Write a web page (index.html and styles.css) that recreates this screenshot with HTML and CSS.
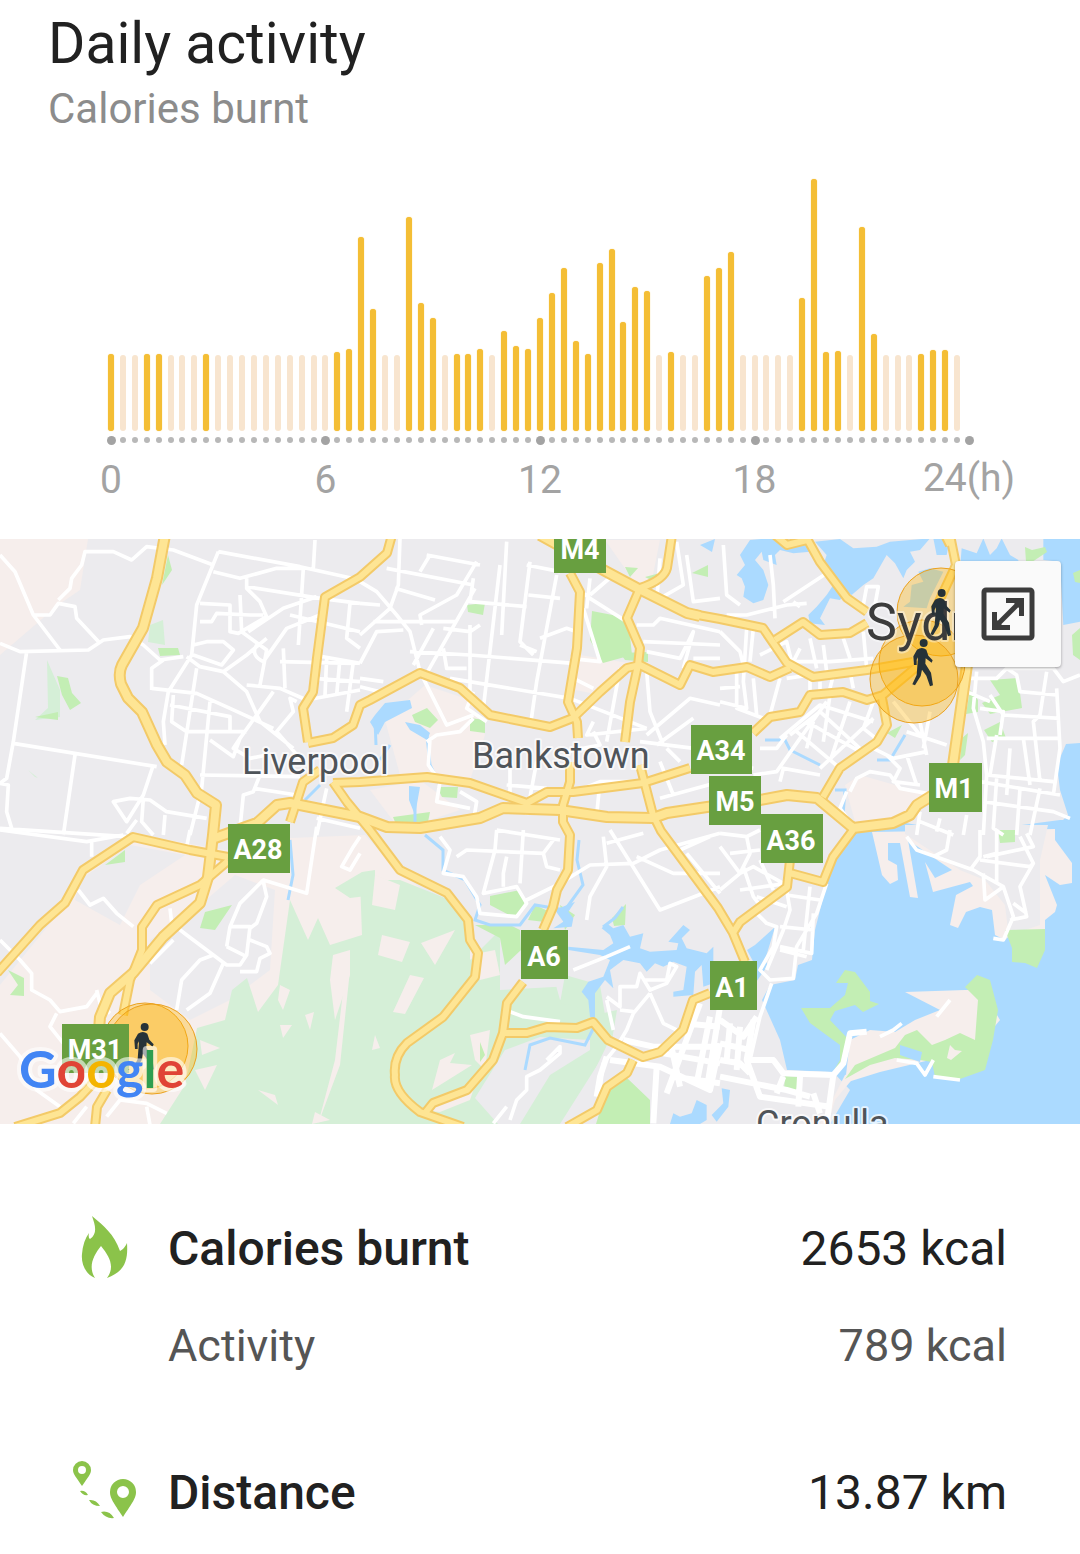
FILE: index.html
```html
<!DOCTYPE html>
<html lang="en">
<head>
<meta charset="utf-8">
<meta name="viewport" content="width=device-width, initial-scale=1">
<title>Daily activity</title>
<link rel="stylesheet" href="styles.css">
</head>
<body>
<main class="page">
  <header class="head">
    <h1 class="title">Daily activity</h1>
    <p class="subtitle">Calories burnt</p>
  </header>

  <section class="chart" aria-label="Calories burnt by hour">
    <div class="bars">
      <i class="on major" style="height:77px"></i><i></i><i></i><i class="on" style="height:77px"></i><i class="on" style="height:77px"></i><i></i>
      <i></i><i></i><i class="on" style="height:77px"></i><i></i><i></i><i></i>
      <i></i><i></i><i></i><i></i><i></i><i></i>
      <i class="major"></i><i class="on" style="height:79px"></i><i class="on" style="height:82px"></i><i class="on" style="height:194px"></i><i class="on" style="height:122px"></i><i></i>
      <i></i><i class="on" style="height:214px"></i><i class="on" style="height:128px"></i><i class="on" style="height:113px"></i><i></i><i class="on" style="height:77px"></i>
      <i class="on" style="height:77px"></i><i class="on" style="height:82px"></i><i></i><i class="on" style="height:100px"></i><i class="on" style="height:85px"></i><i class="on" style="height:82px"></i>
      <i class="on major" style="height:113px"></i><i class="on" style="height:138px"></i><i class="on" style="height:163px"></i><i class="on" style="height:90px"></i><i class="on" style="height:77px"></i><i class="on" style="height:168px"></i>
      <i class="on" style="height:182px"></i><i class="on" style="height:109px"></i><i class="on" style="height:144px"></i><i class="on" style="height:140px"></i><i></i><i class="on" style="height:79px"></i>
      <i></i><i></i><i class="on" style="height:155px"></i><i class="on" style="height:163px"></i><i class="on" style="height:179px"></i><i></i>
      <i class="major"></i><i></i><i></i><i></i><i class="on" style="height:133px"></i><i class="on" style="height:252px"></i>
      <i class="on" style="height:79px"></i><i class="on" style="height:80px"></i><i></i><i class="on" style="height:204px"></i><i class="on" style="height:97px"></i><i></i>
      <i></i><i></i><i class="on" style="height:77px"></i><i class="on" style="height:81px"></i><i class="on" style="height:81px"></i><i></i>
      <i class="end major"></i>
    </div>
    <div class="hours"><span>0</span><span>6</span><span>12</span><span>18</span><span class="last">24(h)</span></div>
  </section>

  <section class="map" aria-label="Activity map">
    <svg class="map-art" viewBox="0 539 1080 585" role="img" aria-label="Map of Sydney">
      <defs>
        <g id="main-roads">
          <path d="M-3 973L40 925 65 903 83 870 133 837 190 850 228 857"/>
          <path d="M228 861L200 885 157 905 142 927 142 950 130 980 123 1015"/>
          <path d="M15 1127L60 1113 80 1097 93 1083M95 1127L97 1107 107 1090"/>
          <path d="M950 535L956 565 935 610M945 535L950 545"/>
          <path d="M392 535L387 553 360 577 325 597 317 658 313 692 303 708 308 742M320 770L303 782 290 822"/>
          <path d="M308 743L333 738 353 725 360 705 370 700 420 673 460 688 490 715 550 727 573 718 600 692 627 668 640 665 680 685 690 665 713 672 747 667 770 677 790 668"/>
          <path d="M687 613L720 619 763 628 787 663 813 677 867 670 913 662"/>
          <path d="M570 573L580 592 577 648 568 702 577 722 578 738M570 762L570 782 563 805 563 822 570 835 568 870 557 890 553 907 543 930M523 982L507 1003 503 1033 493 1060 467 1090 433 1103 425 1113"/>
          <path d="M672 535L667 568Q664 580 640 588L627 618 640 648 638 665 630 702 625 742M640 765L653 815 661 831 718 908 733 933 745 962M733 933L740 922 787 887 790 860M790 873L823 882 833 857 853 830"/>
          <path d="M333 782L347 802 370 830 400 870 447 893 468 920 470 940 478 953 475 977 443 1017 407 1043Q393 1057 395 1075 393 1092 420 1112L463 1127"/>
          <path d="M503 1033L527 1033 547 1027 577 1028 593 1022 608 1040 643 1057 660 1052 683 1030 693 1000 710 993M633 1060L627 1073 607 1087 597 1110 567 1127"/>
          <path d="M333 783L360 782 427 777 470 783 527 803 547 792 573 792 643 783 690 768"/>
          <path d="M805 535L820 562 847 598 867 612M775 640L803 622 820 635 850 633 867 623M753 733L770 717 800 712 810 695 843 692 867 700 883 695 920 664M882 698L887 725 877 742 840 768 823 797M775 535L787 545 807 540"/>
        </g>
        <g id="motorways">
          <path d="M165 535L157 578 143 628 122 665Q118 673 121 684L128 698 142 712 157 745 167 762 185 775 197 793 216 805 213 835 208 877 200 903 163 937 133 973 110 993 100 1017 99 1030"/>
          <path d="M215 838L257 823 277 805 290 803 360 817 387 827 420 828 480 818 503 808 560 810 607 817 653 818 667 813 707 807 760 800 787 795 817 798 853 828 893 823 910 815 917 805 933 795"/>
          <path d="M967 665L953 765M540 535L607 572 637 588 687 613 700 616"/>
        </g>
        <g id="walker">
          <circle cx="35" cy="12" r="12"/>
          <path d="M15 32Q30 22 43 32L49 50 62 64 59 71 41 58 40 74 57 101 63 139 54 142 43 110 30 92 26 111 9 139 1 136 14 108 18 55 14 62 14 78 6 78 4 52Z"/>
        </g>
      </defs>

      <rect y="539" width="1080" height="585" fill="#ecebee"/>

      <!-- open ground, lower left -->
      <g fill="#f6eeec">
        <path d="M0 539H88L80 590 58 605 35 625 0 655Z"/>
        <path d="M0 985L65 905 90 868 140 835 225 850 290 838 365 835 400 873 470 925 475 980 400 1050 400 1124H0Z"/>
        <path d="M385 720L425 685 470 700 485 735 470 780 400 775Z"/>
        <path d="M605 540H660L650 590 700 625 640 590Z"/>
        <path d="M580 655L640 665 600 695 575 690Z"/>
        <path d="M845 785L860 775 895 785 925 795 895 825 855 822Z"/>
        <path d="M370 790L420 780 460 810 400 830Z"/>
      </g>
      <g fill="#ecebee">
        <path d="M80 880L130 845 185 855 140 885 120 925 75 900Z"/>
        <path d="M150 940L200 905 235 875 275 890 270 970 230 1000 190 1020 150 990Z"/>
        <path d="M500 990L590 975 600 1020 510 1025Z"/>
      </g>

      <!-- bush and parks -->
      <g fill="#d5efd7">
        <path d="M197 1028L225 1020 232 990 247 978 258 1012 278 985 290 900 308 940 318 918 330 945 362 935 360 880 400 880 450 900 470 930 470 960 500 930 545 945 560 1000 600 985 610 1045 560 1124H160L185 1085Z"/>
        <path d="M47 660L60 690 60 717 35 720 48 708ZM150 625L163 620 165 645 148 642ZM28 770L38 778 35 777Z"/>
        <path d="M335 888L362 872 375 870 375 895 350 898Z"/>
      </g>
      <g fill="#f6eeec">
        <path d="M333 955L350 950 350 975 335 1020 330 980ZM280 985L290 990 283 1010 278 1000ZM280 1025L292 1025 283 1038ZM305 1015L314 1012 310 1030ZM200 1040L220 1048 202 1055ZM195 1070L217 1065 205 1090ZM258 1090L275 1095 278 1105ZM315 1112L330 1120 312 1124Z"/>
        <path d="M382 935L410 942 402 962 378 955ZM410 975L424 978 405 1014 393 1012ZM421 943L455 930 435 965ZM375 875L400 885 395 910 372 905ZM470 955L495 950 500 975 480 980ZM440 1060L455 1053 450 1063 472 1065 432 1090ZM375 1035L380 1048 372 1050ZM470 1035L490 1030 485 1070 475 1060ZM420 1110L475 1085 470 1100 440 1112Z"/>
        <path d="M345 975L350 970 340 1065 318 1124 335 1060Z"/>
      </g>
      <path d="M475 1098L505 1050 540 1037 590 1040 590 1050 550 1075 520 1124H498ZM607 1045L640 1060 610 1090 590 1080Z" fill="#ecebee"/>
      <path d="M500 930L475 925 490 900 490 860 580 860 590 985 500 990Z" fill="#ecebee"/>
      <path d="M565 975L600 985 598 1012 560 1003ZM595 1015L617 1010 612 1040Z" fill="#d5efd7"/>
      <g fill="#c3eeb4">
        <path d="M592 611L628 618 632 655 603 663 590 640Z"/>
        <path d="M57 676L68 678 72 693 81 703 70 710 62 695ZM158 648L178 648 180 655 160 656ZM168 555L172 570 162 585ZM35 717L58 720 58 712Z"/>
        <path d="M467 605L485 603 483 615 468 612ZM412 715L427 708 438 720 430 728 415 722ZM470 718L485 720 485 733 470 731ZM437 787L458 787 457 798 442 797ZM393 817L430 812 428 822 395 822ZM625 567L638 568 630 577ZM645 577L660 573 655 582ZM692 573L708 565 708 577ZM620 653L648 652 648 662 625 660Z"/>
        <path d="M490 896L520 890 525 905 515 918 490 905ZM475 925L510 925 520 930 521 950 505 965 500 938ZM535 905L550 912 545 922 528 920ZM560 905L575 915 565 930Z"/>
        <path d="M607 1088L627 1078 650 1100 650 1124H596ZM480 1042L485 1055 480 1062ZM612 918L626 904 625 925 614 926Z"/>
        <path d="M990 680L1018 678 1022 708 990 714 982 703 1000 695ZM970 690L978 700 978 712 966 714ZM984 730L1000 722 1006 738 992 742ZM962 738L968 733 965 755 960 760ZM887 733L902 725 895 738ZM205 912L232 905 215 930 200 928ZM8 970L24 978 24 996 10 995 18 985ZM105 865L125 850 125 862ZM1072 635L1080 628V660L1073 655Z"/>
      </g>

      <!-- harbour, bay, ocean and rivers -->
      <g fill="#abdaff">
        <g transform="translate(730 535) scale(.333333)">
          <path d="M60 15L115 10 190 15 250 35 240 50 190 55 150 45 135 60 140 90 100 75 95 50 75 75 100 105 115 150 100 195 70 205 40 185 45 155 35 130 20 120 45 90 30 60Z"/>
          <path d="M255 20L330 12 370 40 440 35 480 20 600 10 570 45 540 50 555 80 530 105 520 130 495 85 470 60 430 130 400 150 365 180 350 170 330 195 300 190 270 250 285 270 240 265 235 240 260 215 290 180 310 150 280 90 290 60Z"/>
          <path d="M545 150L580 140 565 110 600 100 640 110 600 190 590 220 520 215 540 200ZM610 10L660 10 650 60 620 60Z"/>
          <path d="M695 40L740 55 760 10 780 60 800 40 815 10 840 60 865 75 865 100 690 100ZM940 12L1050 10V260L1000 270 990 80 940 75Z"/>
        </g>
        <g transform="translate(540 900) scale(.333333)">
          <path d="M85 140L190 150 220 130 210 105 185 85 200 70 220 85 250 75 270 110 310 100 300 145 330 155 410 150 415 130 385 125 430 75 450 90 425 115 440 145 500 160 520 140 520 250 490 260 485 195 465 215 460 285 400 290 400 275 430 270 440 200 400 185 370 200 345 190 320 215 300 190 250 180 210 210 220 265 195 240 165 280 165 355 150 350 145 300 125 275 145 245 190 230 210 180 180 165 85 150Z"/>
          <path d="M390 672L400 640 420 650 455 640 470 600 500 615 500 660 480 672ZM545 565L570 570 565 620 530 665 515 645 550 610ZM45 30L105 5 85 35 100 55 95 80 40 85 70 65Z"/>
        </g>
        <path d="M700 545L715 539 712 552ZM1066 744L1080 743V840H1060L1055 828 1068 815 1060 790 1057 765Z"/>
        <path d="M853 832L835 860 825 890 815 930 812 960 798 965 795 980 770 985 762 1000 780 1040 787 1070 833 1072 850 1090 830 1124H1080V820H1060L1000 828 935 828 900 822Z"/>
        <path d="M775 927L755 945 747 950 755 965 752 988 768 965 765 960Z"/>
        <path d="M375 715L385 703 410 700 412 708 385 722 378 735 370 722ZM405 722L420 725 430 733 427 740 410 730ZM409 786L420 787 415 815 409 800Z"/>
      </g>
      <path d="M1025 547L1032 550 1045 547 1047 552 1032 562H1026ZM1073 573L1080 570V583L1075 582Z" fill="#c3eeb4"/>
      <g class="river">
        <path d="M375 720L376 745M427 735L430 765 440 785M415 790L415 822M425 835L443 850 443 870 465 880 480 905 475 920 490 925 520 925 535 905 565 910 583 885 577 860 579 840M603 927L615 918 623 907M290 840L293 875 288 900M525 1070L530 1045 550 1038 585 1045 595 1025M380 760L390 745M305 800L320 785M835 790L845 790 843 815M877 760L890 760 905 735M765 740L785 740 790 750 820 765"/>
      </g>

      <!-- peninsulas and islands in the bay -->
      <path d="M872 832L882 875 890 884 898 880 897 865 888 860 888 843 900 843 910 897 918 898 908 840 940 862 952 870 935 878 925 862 933 892 970 882 973 886 956 895 950 925 958 928 966 912 980 907 992 910 995 935 1005 940 1015 930H1045V920L1055 912 1057 905 1045 875 1060 885 1072 883 1072 863 1055 840 1055 829Z" fill="#f6eeec"/>
      <path d="M905 834L960 870 985 880 1005 905 1008 930H1025L1040 925 1040 860 1048 825H905Z" fill="#ecebee"/>
      <g fill="#f6eeec">
        <path d="M905 992L965 990 982 990 1000 1020 975 1050 930 1060 880 1072 848 1082 846 1075 850 1040 870 1030 895 1032 915 1020 940 1010Z"/>
        <path d="M845 1075L860 1070 835 1100 828 1124H820Z"/>
      </g>
      <g fill="#c3eeb4">
        <path d="M836 983L845 970 855 972 870 992 870 1001 879 1004 863 1012 855 1005 835 1011 830 1020 849 1040 845 1065 833 1072 840 1060 840 1045 810 1023 801 1008 830 1008 845 995 848 983Z"/>
        <path d="M965 987L977 975 990 980 998 1010 993 1040 985 1070 960 1079 935 1077 932 1062 920 1060 895 1058 870 1065 845 1079 855 1065 895 1048 905 1035 917 1030 932 1045 945 1040 960 1033 975 1040 978 1000Z"/>
        <path d="M1005 930L1045 929 1045 950 1037 968 1025 963 1012 962 1012 948Z"/>
        <path d="M998 830L1015 830 1015 842 1000 843ZM785 1076L799 1077 796 1092 784 1090Z"/>
      </g>
      <path d="M900 1045L922 1052 920 1062 900 1055Z" fill="#abdaff"/>
      <path d="M950 1045L955 1050 962 1051 951 1060 947 1058Z" fill="#f6eeec"/>

      <!-- local streets, drawn on a grid of thirds -->
      <g class="streets">
        <g transform="translate(0 535) scale(.333333)">
          <path d="M0 60L45 110 100 240 180 345M0 325L60 350 265 345 310 315 390 305 430 330 480 375 550 365M100 240L150 240 175 205 225 215 230 250 300 325M175 195L210 160 215 130 245 90 255 50 340 50 395 75 440 35 520 45 640 90M80 350L40 620 20 730 0 745 25 750 20 830 35 880M40 625L470 695M225 660L190 900M0 880L380 905"/>
          <path d="M655 50L590 210 575 360 505 470 490 560 495 630M655 50L900 95 1080 135M640 110L720 130 830 100 910 100M945 15L940 100M910 100L895 330M740 130L740 160 780 200 800 245 715 295 690 290 690 210 600 205M740 155L960 190 1080 205M600 260L635 260 650 235 750 240 790 240M745 290L850 220 950 185M720 180L725 290 800 345 780 450M580 330L620 320 670 320 700 345 665 390 580 360M770 330Q750 360 790 380L860 280 960 240M870 240L1080 290M560 365L600 395 670 410 740 360 800 310M670 410L740 470 780 560 880 640M740 450L840 460 920 495 1080 465M850 340L855 460M840 380L1060 385M940 360L1080 385M1050 205L1040 310 1080 340M980 370L975 480M1020 370L1010 480M940 430L1080 440M1060 380L1040 530M455 465L455 400 490 375M455 460L590 475 690 520 820 580M510 510L690 545 690 590M520 480L515 560 560 590 740 590M590 400L545 690M630 500L605 760 570 900M630 615L700 665 720 610 820 470M890 500L870 490 880 530 830 590 900 670M720 610L700 640 750 670 800 660M460 690L430 780 380 860 340 800 390 790 450 795 500 830 620 850M600 720L900 725M780 720L760 770 730 780 720 880M760 760L890 780M430 790L425 860 460 900M490 900L495 840M980 760L950 900M950 850L1080 880"/>
        </g>
        <g transform="translate(360 535) scale(.333333)">
          <path d="M0 140L50 170 110 240 150 290 180 410M120 10L115 150 90 220 0 300M80 100L340 150M210 60L180 110M105 160L225 195M350 80L290 180 180 240 185 270M200 60L360 90M0 205L60 210M40 260L290 260M0 385L50 290 130 285M345 160L200 415M420 90L370 520M340 130L330 200 500 215M440 20L425 300M510 80L480 320 520 360M500 90L600 110M505 180L600 190M590 120L530 440 510 580M150 350L330 360 640 385M220 280L160 390M250 340L260 400 320 400M330 270L330 470M250 280L330 290 360 270M270 430L630 490 860 580M540 310L620 280 650 290M480 330L530 350M0 430L70 440M0 455L60 470M190 430L240 530 260 570 340 540M200 620L230 600 300 590 340 550M210 610L205 690 240 740M340 470L320 520 380 560M640 430L700 460M670 220L720 380 630 370M690 180L760 120M690 130L680 220M650 160L690 190 800 260M900 70L890 200M900 190L970 150 950 20M980 60L1000 200 1080 190M830 270L880 270 900 250 1080 290M850 320L1080 330M860 350L960 370 1000 290 970 400M860 410L870 530 910 630M1000 370L1080 370M780 400L740 620M700 560L680 600 860 580M860 600L990 490 1080 510M840 620L1080 650M890 630L1000 550M700 590L720 630 620 650M450 700L450 790 530 800M440 750L560 760M530 680L500 840M670 760L720 740 860 740M710 840L720 740M900 790L1080 740M900 680L940 780M960 680L920 640M300 770L350 800 340 860M240 740L230 800 330 820"/>
        </g>
        <g transform="translate(720 535) scale(.333333)">
          <path d="M10 30L20 180 60 210M150 60L160 150 165 250M190 200L320 115M20 240L80 240 200 210 260 205M220 200L240 215M0 290L60 350 70 390M80 280L70 440 80 520 0 500M100 280L90 380M120 360L200 320 220 400M240 340L220 380 330 380 460 370M270 310L290 400M310 330L320 410M370 310L390 370M430 290L440 400M430 210L440 155 475 155 465 210M50 400L50 520 130 550M0 460L60 455M100 430L110 540M180 430L150 540M200 430L270 420 270 490M300 440L300 480M340 420L330 460M390 410L400 460M260 560L330 600 420 650M210 600L300 530 430 650M180 610L300 510 460 560M230 590L360 700M280 560L260 640M320 500L240 610M330 480L310 620M390 500L330 680M460 500L430 580 480 620M100 720L170 710 240 610M0 680L100 700M120 640L170 640 200 600M180 740L190 700 300 720M740 430L830 430 860 400 1000 400 1030 440 1080 420M770 410L760 520 790 620 800 720 790 900M740 470L810 500M810 480L850 540 1020 550M780 520L850 530 840 600M860 400L890 420 900 470 1010 480M980 410L960 540 940 560 960 740M800 610L1020 610M1010 460L1020 640 1000 780M870 640L860 780M910 610L930 750M800 720L1000 740M830 600L810 720M780 740L1020 780M790 800L1000 830 1050 850M830 730L820 880 850 900M900 760L890 900M960 760L930 900M460 640L520 670 620 650M500 660L540 700 520 740 600 750M390 770L410 730 450 710 510 720 540 760 620 775M560 660L590 750M600 560L620 660M560 590L680 630M520 500L600 600M630 530L610 640M390 860L360 820 380 770M600 830L590 900M660 850L650 890M740 840L730 900M600 860L700 900M300 700L460 550"/>
        </g>
        <g transform="translate(0 830) scale(.333333)">
          <path d="M0 0L260 35 370 15M275 30L275 80M380 10L410 -30M570 0L560 50M235 180L270 225 310 205 350 250 400 290M510 235L515 280 560 315 640 375 680 405 720 405 740 375 750 290 690 290 680 350M690 290L720 220 790 150 920 190 950 -10M790 155L800 200 770 280 750 295M750 330L800 350 810 370 780 385 770 425 720 425M680 350L740 380M520 330L450 400M640 375L600 390 545 450 530 540M670 400L630 490 560 540M0 330L60 390 95 430 95 480 150 510 180 545 260 530 290 490M170 550L150 590 190 640M0 610L60 680 110 780 180 830M1080 20L1060 50 1025 110 1050 120 1080 70M320 860L360 810 440 820 500 850M440 830L450 885M220 880L260 830M290 480L300 520 330 550"/>
        </g>
        <g transform="translate(360 830) scale(.333333)">
          <path d="M240 20L270 60 250 130 310 140 350 200 360 250 470 260 500 220 470 170 370 190 405 60 410 0M290 80L320 60 550 70 560 110 600 120M480 160L490 0M440 80L430 130 430 170M410 0L600 30M550 70L580 30M500 210L600 160 690 105 820 100 900 60 1080 10M730 20L740 110 690 200 680 270M750 0L900 240 1080 170M740 40L850 10M830 80L940 130 1080 130M960 60L1050 20M980 70L1080 190M450 545L490 560 600 575M640 420L740 380 810 350M740 510L760 600M740 500L780 530 780 470 830 470 840 430 870 480 920 460 950 410 930 400 920 450 850 450M870 490L820 550 800 600 770 650 730 700 720 780M870 490L910 580 950 600M820 545L780 540M560 690L600 650 600 670 540 720 500 740 500 780 470 810 450 870M400 880L440 830"/>
        </g>
        <g transform="translate(720 830) scale(.333333)">
          <path d="M0 50L60 130 0 180M0 10L80 20 120 0M80 20L90 70 60 130 100 110 190 160M30 70L120 60M70 110L100 200 130 240M120 90L160 180M60 180L200 160M110 250L140 280 170 290 160 350 120 420 150 450 220 445 230 350 290 250 320 160M110 200L200 230M200 180L210 240 190 300 140 420M200 195L300 210M180 290L280 300M270 170L250 360M280 250L275 370 180 350M180 360L260 380M155 460L120 560 90 690M560 20L590 60 760 120 850 170 880 260 850 330 820 325M690 0L680 60 640 80M780 0L780 80 750 120M800 80L940 50 920 10M830 0L830 160M780 90L930 110 940 100 900 170 920 260 870 270M790 80L830 70M790 130L795 210 850 170M900 20L940 100M880 220L920 250M530 690L590 700 615 735 640 690M640 740L720 750M480 620L520 600 545 580M690 510L650 560"/>
        </g>
        <g class="wide" transform="translate(360 830) scale(.333333)">
          <path d="M1020 520L920 790M1080 590L970 580M790 630L880 650 1080 650M750 690L900 710 1050 780 1080 640M910 670L1080 700M930 630L960 770M1050 560L1010 760M740 680L720 740 710 800M890 710L880 880M940 740L1080 760M1080 530L1040 780"/>
        </g>
        <g class="wide" transform="translate(720 830) scale(.333333)">
          <path d="M110 560L70 620 0 570M100 570L80 690 120 800 330 830M0 640L90 660M0 690L60 700 90 730M80 690L160 690 190 730 340 735 370 700 390 610 440 605M0 740L200 780 270 800M60 590L50 720M190 740L170 790M340 735L320 880M240 740L235 830M280 790L300 850M30 580L20 690"/>
        </g>
      </g>

      <use href="#main-roads" class="road-case"/>
      <use href="#motorways" class="road-case motorway"/>
      <use href="#main-roads" class="road-fill"/>
      <use href="#motorways" class="road-fill motorway"/>

      <!-- place names, activity zones and route shields -->
      <g class="zone">
        <circle cx="941" cy="612" r="44"/><circle cx="922" cy="663" r="43"/><circle cx="914" cy="679" r="44"/>
        <circle cx="145" cy="1046" r="43"/><circle cx="152" cy="1049" r="45"/>
      </g>
      <g class="place">
        <text x="242" y="774">Liverpool</text>
        <text x="472" y="768">Bankstown</text>
        <text x="756" y="1136">Cronulla</text>
        <text x="866" y="640" class="city">Sydney</text>
      </g>
      <g fill="#689f40">
        <path d="M554 539H606V573H554ZM691 725H752V774H691ZM709 776H761V825H709ZM761 814H823V863H761ZM929 763H982V812H929ZM228 824H290V873H228ZM521 930H568V979H521ZM710 961H757V1010H710ZM62 1024H129V1073H62Z"/>
      </g>
      <g class="shield">
        <text x="580" y="559">M4</text><text x="721" y="760">A34</text><text x="735" y="811">M5</text><text x="791" y="850">A36</text><text x="954" y="798">M1</text><text x="258" y="859">A28</text><text x="544" y="966">A6</text><text x="732" y="997">A1</text><text x="95" y="1059">M31</text>
      </g>

      <g fill="#263238">
        <use href="#walker" transform="translate(930 589) scale(.333333)"/>
        <use href="#walker" transform="translate(912 639) scale(.333333)"/>
        <use href="#walker" transform="translate(133 1023) scale(.333333)"/>
      </g>
      <text x="19" y="1088" class="logo"><tspan fill="#4285f4">G</tspan><tspan fill="#e04436">o</tspan><tspan fill="#f4b400">o</tspan><tspan fill="#4285f4">g</tspan><tspan fill="#2f9e50">l</tspan><tspan fill="#e04436">e</tspan></text>
    </svg>
    <button class="expand" type="button" aria-label="Expand map">
      <svg viewBox="0 0 54 54" width="54" height="54" aria-hidden="true">
        <rect x="3" y="3" width="48" height="48" rx="2" fill="none" stroke="#3c3c3c" stroke-width="5"/>
        <path d="M15 39L39 15" stroke="#3c3c3c" stroke-width="5"/>
        <path fill="#3c3c3c" d="M25 11H43V29H38V21L33 16H25ZM11 25H16V33L21 38H29V43H11Z"/>
      </svg>
    </button>
  </section>

  <section class="stats">
    <div class="stat">
      <svg class="icon" viewBox="0 0 72 72" aria-hidden="true"><path fill="#8bc34a" d="M28 4C40 14 50 22 56 39Q61 36 63 31C64 47 62 59 43 66C51 55 46 45 37 34C29 44 24 55 31 66C21 62 17 51 18 42Q19 29 25 21Q24 26 26 27C34 21 31 13 28 4Z"/></svg>
      <h2 class="name">Calories burnt</h2><span class="value">2653 kcal</span>
    </div>
    <div class="stat sub">
      <span class="name">Activity</span><span class="value">789 kcal</span>
    </div>
    <div class="stat">
      <svg class="icon" viewBox="0 0 72 72" aria-hidden="true"><g fill="#8bc34a" fill-rule="evenodd"><path d="M18 30C12 21 9 18 9 14A9 9 0 0 1 27 14C27 18 24 21 18 30ZM18 10A4 4 0 1 0 18 18 4 4 0 0 0 18 10ZM59 61C49 46 46 42 46 36A13 13 0 0 1 72 36C72 42 69 46 59 61ZM59 30A6 6 0 1 0 59 42 6 6 0 0 0 59 30Z"/><path d="M16 35Q21 34 24 39 19 40 16 35ZM25 44Q32 43 36 50 28 50 25 44ZM37 56Q45 54 50 62 42 63 37 56Z"/></g></svg>
      <h2 class="name">Distance</h2><span class="value">13.87 km</span>
    </div>
  </section>
</main>
</body>
</html>
```
FILE: styles.css
```css
* { box-sizing: border-box; }

body {
  margin: 0;
  background: #fff;
  color: #212121;
  font-family: Roboto, "Liberation Sans", sans-serif;
}

h1, h2, p { margin: 0; font-weight: 400; }

.head { padding: 10px 48px 0; }

.title { font-size: 57px; line-height: 68px; }

.subtitle { color: #8c8c8c; font-size: 42px; line-height: 62px; }

.chart { padding: 39px 105px 0; }

.bars {
  display: grid;
  grid-template-columns: repeat(73, 1fr);
  align-items: end;
  justify-items: center;
  height: 252px;
}

.bars i {
  position: relative;
  width: 6px;
  height: 76px;
  border-radius: 3px;
  background: #f8e5cf;
}

.bars .on { background: #f4be35; box-shadow: 0 0 1px #f4be35; }

.bars .end { background: none; }

.bars i::after {
  content: "";
  position: absolute;
  left: 0;
  top: calc(100% + 6px);
  width: 6px;
  height: 6px;
  border-radius: 50%;
  background: #b8b8b8;
}

.bars .major::after {
  left: -1px;
  top: calc(100% + 5px);
  width: 9px;
  height: 9px;
  background: #a3a3a3;
}

.hours {
  display: flex;
  justify-content: space-between;
  padding: 24px 6px 0;
  color: #a3a3a3;
  font-size: 39px;
  line-height: 50px;
}

.hours span {
  display: flex;
  justify-content: center;
  width: 0;
}

.hours .last { line-height: 46px; }

.map { position: relative; margin-top: 34px; overflow: hidden; }

.map-art { display: block; width: 100%; height: auto; }

.river path { fill: none; stroke: #abdaff; stroke-width: 3; }

.streets path { fill: none; stroke: #fff; stroke-width: 11; stroke-linejoin: round; }

.streets .wide path { stroke-width: 18; }

.road-case, .road-fill { fill: none; stroke: #f3ca68; stroke-width: 10; stroke-linejoin: round; }

.road-case.motorway { stroke-width: 12; }

.road-fill { stroke: #fee594; stroke-width: 6; }

.road-fill.motorway { stroke-width: 8; }

.place { fill: #4f5459; font-size: 36px; stroke: #fff; stroke-opacity: .7; stroke-width: 4; paint-order: stroke; stroke-linejoin: round; }

.place .city { fill: #3c3c3c; font-size: 52px; stroke-opacity: .4; }

.shield { fill: #fff; font-size: 27px; font-weight: 700; text-anchor: middle; }

.zone { fill: #ffb300; fill-opacity: .34; stroke: #eba11d; stroke-width: 1; }

.logo { font-family: Lato, "Open Sans", sans-serif; font-size: 52px; font-weight: 700; stroke: #fff; stroke-opacity: .6; stroke-width: 8; paint-order: stroke; stroke-linejoin: round; }

.expand {
  position: absolute;
  top: 22px;
  right: 19px;
  display: grid;
  place-items: center;
  width: 106px;
  height: 106px;
  padding: 0;
  border: 0;
  border-radius: 4px;
  background: #fafafa;
  box-shadow: 0 1px 3px rgba(0, 0, 0, .35);
}

.stats { padding: 75px 73px 12px 64px; }

.stat {
  display: grid;
  grid-template-columns: 72px 1fr auto;
  column-gap: 32px;
  align-items: center;
  height: 98px;
  font-size: 48px;
}

.stat .name { grid-column: 2; font-size: 48px; font-weight: 500; }

.icon { width: 72px; height: 72px; }

.stat.sub { height: 96px; margin-bottom: 50px; color: #555; font-size: 45px; }

.stat.sub .name { font-size: 45px; font-weight: 400; }
```
